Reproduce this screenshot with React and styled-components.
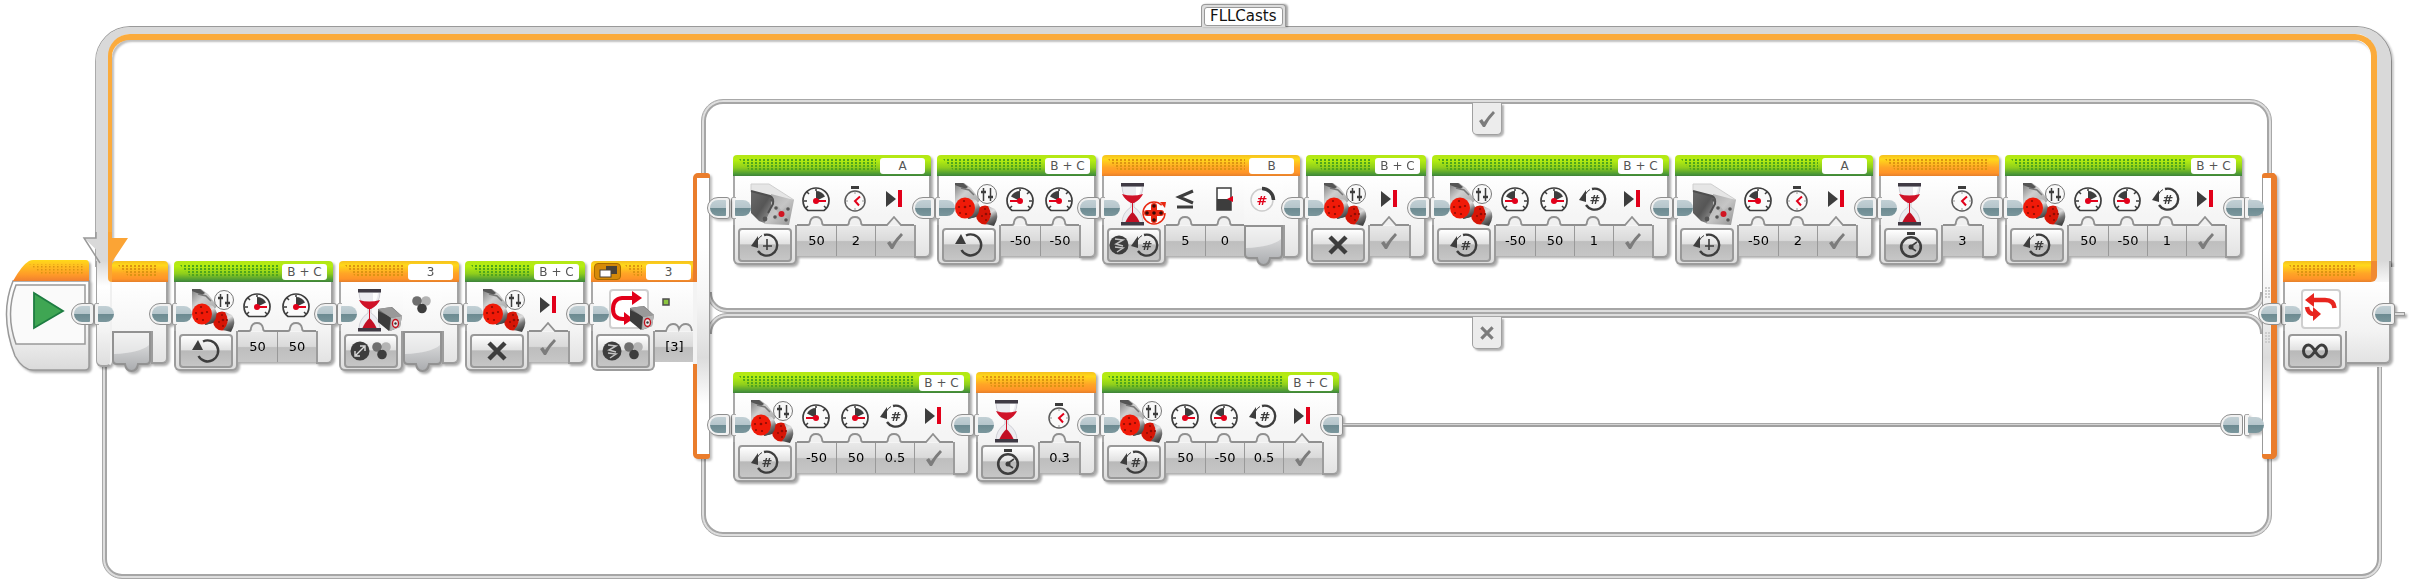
import React from 'react';
import styled, { createGlobalStyle, css } from 'styled-components';

const GlobalStyle = createGlobalStyle`
  * {
    box-sizing: border-box;
  }
  body {
    margin: 0;
    background: #fff;
    font-family: 'DejaVu Sans', Verdana, sans-serif;
  }
  button,
  input {
    font: inherit;
    margin: 0;
    padding: 0;
    border: 0;
    background: none;
    color: inherit;
  }
  svg {
    display: block;
    flex: none;
    overflow: visible;
  }
`;

const headerColors = {
  green: 'linear-gradient(#b4e616, #b4ee10 25%, #8fce1c 60%, #4c9a36 90%, #3f8239)',
  orange: 'linear-gradient(#f5c020, #ffd91a 20%, #ffa426 60%, #ff9428 85%, #e5802c)',
};

const dotColors = {
  green: '#4fa51c',
  orange: '#dc9412',
};

const bodyFill = 'linear-gradient(#fff, #f3f3f3 49px, #dedede 89px)';

/* ---------- page ---------- */

const Page = styled.main`
  display: flex;
  align-items: flex-start;
  gap: 6px;
  min-width: 2380px;
  padding: 27px 22px 4px 5px;
`;

const Loop = styled.section`
  position: relative;
  flex: 1;
  display: flex;
  align-items: flex-start;
  padding-bottom: 42px;
`;

const LoopRail = styled.div`
  position: absolute;
  top: 0;
  left: 0;
  right: 0;
  height: 240px;
  border: solid #d9d9d9;
  border-width: 7px 14px 0 12px;
  border-radius: 34px 34px 0 0;
  box-shadow: 0 -1px 0 #999, 1px 0 0 #888, -1px 0 0 #aaa, 3px 1px 2px rgba(0, 0, 0, 0.2);
  clip-path: inset(-4px -6px 0 -4px);
  &::before {
    content: '';
    position: absolute;
    inset: 0;
    border: solid #fbab3c;
    border-width: 6px 6px 0 4px;
    border-radius: 22px 22px 0 0;
  }
  &::after {
    content: '';
    position: absolute;
    inset: 6px 6px -8px 4px;
    border-radius: 18px 18px 0 0;
    box-shadow: inset 2px 2px 2px rgba(0, 0, 0, 0.25);
  }
`;

const wire = css`
  border: 1px solid #a8a8a8;
  box-shadow: inset 0 0 0 2px #dedede, inset 0 0 0 4px #a6a6a6;
`;

const LoopReturn = styled.div`
  position: absolute;
  top: 330px;
  left: 6px;
  right: 9px;
  bottom: 0;
  border-radius: 0 0 20px 20px;
  ${wire}
  clip-path: inset(10px -4px -4px -4px);
`;

const LoopName = styled.button`
  position: absolute;
  top: -23px;
  left: 1105px;
  height: 23px;
  padding: 2px;
  border: 1px solid #999;
  border-bottom: 0;
  border-radius: 4px 4px 0 0;
  background: #ddd;
  box-shadow: 2px 0 2px rgba(0, 0, 0, 0.35);
  color: #111;
  font-size: 15px;
  line-height: 17px;
  span {
    display: block;
    padding: 0 5px;
    border: 1px solid #999;
    border-radius: 3px;
    background: #fff;
  }
`;

/* ---------- blocks ---------- */

const Sequence = styled.div`
  display: flex;
  align-items: flex-start;
  gap: 6px;
  padding-top: ${(props) => props.$top}px;
`;

const BlockBox = styled.article`
  position: relative;
  flex: none;
  filter: drop-shadow(2px 2px 1px rgba(0, 0, 0, 0.32));
`;

const Header = styled.header`
  display: flex;
  align-items: center;
  justify-content: flex-end;
  gap: 4px;
  height: 21px;
  padding: 0 6px;
  border-radius: 4px 4px 0 0;
  background: ${(props) => headerColors[props.$tone]};
`;

const Dots = styled.span`
  flex: 1;
  align-self: flex-start;
  height: 11px;
  margin-top: 4px;
  margin-right: ${(props) => (props.$last ? 5 : 0)}px;
  background: radial-gradient(circle at 1px 1px, ${(props) => dotColors[props.$tone]} 1px, transparent 1px) 0 0 / 4px 3px;
  clip-path: polygon(0 0, 100% 0, 100% 100%, 10px 100%);
`;

const Port = styled.button`
  width: 45px;
  height: 16px;
  border-radius: 3px;
  background: #fff;
  color: #555;
  font-size: 12px;
  line-height: 16px;
  white-space: nowrap;
`;

const Body = styled.div`
  display: flex;
  align-items: flex-start;
`;

const ModeColumn = styled.div`
  width: 64px;
`;

const Picture = styled.div`
  display: flex;
  justify-content: flex-start;
  height: 49px;
  padding: 7px 0 0 16px;
  border-left: 2px solid #a9a9a9;
  background: linear-gradient(#fff, #f3f3f3);
`;

const ModeFoot = styled.div`
  height: 40px;
  padding: 3px;
  border: 2px solid #9c9c9c;
  border-top: 0;
  border-radius: 0 0 6px 6px;
  background: linear-gradient(#f3f3f3, #dedede);
`;

const ModeButton = styled.button`
  display: flex;
  align-items: center;
  justify-content: center;
  gap: 2px;
  width: 54px;
  height: 34px;
  border: 2px solid #999;
  border-radius: 4px;
  background: linear-gradient(#fff, #e2e2e2 45%, #b9b9b9 50%, #c6c6c6);
`;

const ParamColumn = styled.div`
  width: 39px;
`;

const ParamIcon = styled.div`
  display: flex;
  align-items: center;
  justify-content: center;
  height: ${(props) => (props.$slot ? 49 : 40)}px;
  padding-top: ${(props) => (props.$slot ? 0 : 6)}px;
  padding-right: 1px;
  padding-bottom: ${(props) => (props.$slot ? 3 : 0)}px;
  background: linear-gradient(#fff, #f5f5f5);
`;

const valueBox = css`
  display: block;
  width: 39px;
  height: 30px;
  border-left: ${(props) => (props.$first ? '0' : '1px solid #999')};
  background: linear-gradient(#e9e9e9, #dadada 48%, #bebebe 52%, #c6c6c6);
`;

const Value = styled.input`
  ${valueBox}
  padding-bottom: 2px;
  color: #000;
  font-size: 13px;
  text-align: center;
`;

const CheckValue = styled.button`
  ${valueBox}
  padding-left: 11px;
`;

const Tail = styled.div`
  width: 17px;
  height: 82px;
  border-right: 2px solid #a3a3a3;
  border-bottom: 2px solid #9c9c9c;
  border-radius: 0 0 6px 0;
  background: ${bodyFill};
  &::before {
    content: '';
    display: block;
    height: 31px;
    margin-top: 49px;
    border-left: 2px solid #9c9c9c;
  }
`;

const tealFill = 'linear-gradient(#c2d0d5, #b5c5cb 50%, #6c8a91 50%, #7b979d)';

const PlugOut = styled.span`
  position: absolute;
  z-index: 2;
  top: ${(props) => props.$top ?? 42}px;
  ${(props) => (props.$left !== undefined ? `left: ${props.$left}px;` : 'right: -4px;')}
  width: 23px;
  height: 22px;
  padding: 2px;
  border: 1px solid #8f8f8f;
  border-radius: 11px 3px 3px 11px;
  background: #f1f1f1;
  &::before {
    content: '';
    display: block;
    width: 16px;
    height: 16px;
    border-radius: 9px 1px 1px 9px;
    background: ${tealFill};
  }
`;

const PlugIn = styled.span`
  position: absolute;
  z-index: 2;
  top: ${(props) => props.$top ?? 42}px;
  left: ${(props) => props.$left ?? -2}px;
  width: 20px;
  height: 22px;
  padding: 3px 0 0 3px;
  border: solid #8f8f8f;
  border-width: 0 0 0 1px;
  border-radius: 3px 0 0 3px;
  background: linear-gradient(#aaa 1px, #f4f4f4 1px, #f4f4f4 21px, #aaa 21px) 0 0 / 4px 22px no-repeat;
  &::before {
    content: '';
    display: block;
    width: 16px;
    height: 16px;
    border-radius: 1px 9px 9px 1px;
    background: ${tealFill};
  }
`;

/* ---------- start, loop ends ---------- */

const StartBox = styled.div`
  position: relative;
  width: 85px;
  margin-top: 233px;
  filter: drop-shadow(2px 2px 1px rgba(0, 0, 0, 0.32));
`;

const LoopHeadBox = styled.div`
  position: relative;
  flex: none;
  display: flex;
  width: 72px;
  margin-top: 234px;
  margin-right: 6px;
  filter: drop-shadow(2px 2px 1px rgba(0, 0, 0, 0.32));
`;

const LoopHeadSide = styled.div`
  width: 16px;
  height: 106px;
  border: 1px solid #a3a3a3;
  border-width: 0 2px 2px 1px;
  border-right-color: #f0f0f0;
  border-radius: 0 0 6px 6px;
  background: linear-gradient(#d9d9d9, #fff 25px, #f3f3f3 70px, #dedede);
`;

const LoopHeadMain = styled.div`
  width: 56px;
`;

const LoopArrow = styled.svg`
  position: absolute;
  top: 205px;
  left: -13px;
`;

const LoopTailBox = styled.div`
  position: relative;
  flex: none;
  width: 108px;
  margin-top: 234px;
  filter: drop-shadow(2px 2px 1px rgba(0, 0, 0, 0.32));
`;

const LoopTailHeader = styled(Header)`
  width: 94px;
  padding-right: 14px;
  border-right: 6px solid #f08a32;
  border-radius: 4px 0 6px 0;
`;

const LoopTailTop = styled.div`
  border-right: 2px solid #a3a3a3;
  border-radius: 4px 0 0 0;
  background: linear-gradient(#d9d9d9, #f8f8f8);
`;

const LoopTailSide = styled.div`
  flex: 1;
  height: 82px;
  border-right: 2px solid #a3a3a3;
  border-bottom: 2px solid #9c9c9c;
  border-radius: 0 0 6px 0;
  background: ${bodyFill};
`;

const Stub = styled.span`
  position: absolute;
  top: 51px;
  right: -14px;
  width: 12px;
  height: 4px;
  border: 1px solid #999;
  background: #ddd;
`;

const PictureFrame = styled.div`
  display: flex;
  align-items: center;
  justify-content: center;
  width: 40px;
  height: 40px;
  border: 2px solid #cfcfcf;
  border-radius: 4px;
  background: #fff;
`;

/* ---------- switch ---------- */

const SwitchBox = styled.section`
  flex: 1;
  display: flex;
  align-items: flex-start;
  margin-left: 6px;
  margin-right: 6px;
`;

const SwitchHead = styled.div`
  position: relative;
  z-index: 1;
  flex: none;
  width: 102px;
  margin-top: 234px;
`;

const SwitchHeader = styled(Header)`
  width: 106px;
`;

const ViewButton = styled.button`
  display: flex;
  align-items: center;
  justify-content: center;
  width: 27px;
  height: 17px;
  margin-left: -3px;
  border: 1px solid #a86a00;
  border-radius: 4px;
  background: #d68a08;
`;

const Gate = styled.div`
  position: relative;
  flex: none;
  width: ${(props) => (props.$end ? 15 : 17)}px;
  height: 286px;
  margin-top: 146px;
  border: solid #ea7d2c;
  border-width: ${(props) => (props.$end ? '5px 6px 5px 0' : '5px 0 5px 4px')};
  border-radius: ${(props) => (props.$end ? '3px 5px 5px 3px' : '5px 3px 3px 5px')};
  background: linear-gradient(#fff 25%, #f4f4f4 45%, #dcdcdc 65%, #fff 82%);
  filter: drop-shadow(2px 2px 1px rgba(0, 0, 0, 0.25));
  z-index: 1;
  &::before {
    content: '';
    position: absolute;
    inset: 0;
    border: solid #999;
    border-width: ${(props) => (props.$end ? '0 0 0 1px' : '0 1px 0 0')};
  }
`;

const GateOpening = styled.span`
  position: absolute;
  top: 104px;
  left: -4px;
  width: 4px;
  height: 82px;
  background: #f3f3f3;
`;

const GateDots = styled.span`
  position: absolute;
  top: ${(props) => props.$top}px;
  left: 3px;
  width: 5px;
  height: 12px;
  background: radial-gradient(circle at 1px 1px, #ccc 1px, transparent 1px) 0 0 / 3px 3px;
`;

const Cases = styled.div`
  flex: 1;
  margin-top: 72px;
`;

const Case = styled.div`
  position: relative;
  height: ${(props) => (props.$last ? 224 : 214)}px;
  padding: 0 19px 0 23px;
`;

const CaseWire = styled.div`
  position: absolute;
  left: -9px;
  right: -10px;
  height: 90px;
  ${wire}
  ${(props) =>
    props.$bottom
      ? 'bottom: 0; border-radius: 0 0 22px 22px; clip-path: inset(8px -4px -4px -4px);'
      : 'top: 0; border-radius: 22px 22px 0 0; clip-path: inset(-4px -4px 8px -4px);'}
`;

const CaseDivider = styled.div`
  position: absolute;
  left: -3px;
  right: -3px;
  height: 44px;
  ${wire}
  ${(props) =>
    props.$bottom
      ? 'bottom: 0; border-radius: 0 0 20px 20px; clip-path: inset(23px 0 0 0);'
      : 'top: 0; border-radius: 20px 20px 0 0; clip-path: inset(0 0 23px 0);'}
`;

const CaseTab = styled.button`
  position: absolute;
  z-index: 1;
  top: 4px;
  left: 762px;
  display: flex;
  align-items: center;
  justify-content: center;
  width: 30px;
  height: 32px;
  border: 1px solid #a0a0a0;
  border-top: 0;
  border-radius: 0 0 5px 5px;
  background: #ececec;
  box-shadow: 2px 2px 2px rgba(0, 0, 0, 0.3);
`;

const CaseLine = styled.div`
  position: relative;
  flex: 1;
  height: 4px;
  margin-top: 51px;
  margin-right: 4px;
  margin-left: -2px;
  background: linear-gradient(#a8a8a8 1px, #d4d4d4 1px, #d4d4d4 2px, #a0a0a0 2px);
`;

/* ---------- pictures ---------- */

const dark = '#3d3d3d';
const red = '#e2001a';

const MotorsPicture = () => (
  <svg width="43" height="43" viewBox="0 0 43 43">
    <defs>
      <linearGradient id="arm" x1="0" y1="0" x2="1" y2="1">
        <stop offset="0" stopColor="#7c7c7c" />
        <stop offset=".4" stopColor="#cfcfcf" />
        <stop offset="1" stopColor="#a4a4a4" />
      </linearGradient>
      <linearGradient id="drum" x1="0" y1="0" x2=".3" y2="1">
        <stop offset="0" stopColor="#b4b4b4" />
        <stop offset=".4" stopColor="#dedede" />
        <stop offset=".7" stopColor="#777" />
        <stop offset="1" stopColor="#444" />
      </linearGradient>
    </defs>
    <path d="M0 0H9L16 5L25 17L20 24H0Z" fill="url(#arm)" />
    <path d="M0 0H8L13 4L10 6L0 2Z" fill="#555" />
    <path d="M6 5L14 7L19 12" fill="none" stroke="#777" strokeWidth="1.500" />
    <path d="M9 15L20 17Q28 23 24 33L13 36Z" fill="url(#drum)" />
    <ellipse cx="30" cy="32" rx="9" ry="9.500" fill="#d71506" />
    <path d="M33 23L40 26Q45 33 39 43L31 41Q39 33 33 23Z" fill="url(#drum)" />
    <path d="M14 15L21 17Q28 25 21 34L13 36Q22 26 14 15Z" fill="url(#drum)" />
    <ellipse cx="10" cy="25" rx="10" ry="10.500" fill="#f01a08" />
    <g fill="#8d0c04">
      <circle cx="10" cy="24" r="1.300" />
      <circle cx="4" cy="24" r="1.100" />
      <circle cx="15" cy="23" r="1.100" />
      <circle cx="9" cy="18" r="1.100" />
      <circle cx="11" cy="31" r="1.100" />
      <circle cx="5" cy="30" r="1" />
      <circle cx="31" cy="31" r="1.300" />
      <circle cx="27" cy="33" r="1" />
      <circle cx="35" cy="31" r="1" />
      <circle cx="31" cy="37" r="1" />
      <circle cx="30" cy="26" r="1" />
    </g>
    <circle cx="32" cy="11" r="9.500" fill="#f8f8f8" stroke="#777" />
    <path d="M28.500 5V18M35.500 5V18" stroke={dark} strokeWidth="1.500" />
    <path d="M26 9H31M33 14H38" stroke={dark} strokeWidth="2.500" />
  </svg>
);

const MediumMotorPicture = () => (
  <svg width="43" height="43" viewBox="0 0 43 43">
    <defs>
      <linearGradient id="side" x1="0" y1="0" x2="1" y2="1">
        <stop offset="0" stopColor="#6a6a6a" />
        <stop offset=".5" stopColor="#565656" />
        <stop offset="1" stopColor="#a8a8a8" />
      </linearGradient>
      <linearGradient id="face" x1="0" y1="0" x2="1" y2="1">
        <stop offset="0" stopColor="#a6a6a6" />
        <stop offset=".5" stopColor="#c6c6c6" />
        <stop offset="1" stopColor="#929292" />
      </linearGradient>
    </defs>
    <path d="M0 1H18L43 17L22 17L0 8Z" fill="#e6e6e6" stroke="#cfcfcf" />
    <path d="M0 8L20 13L22 24L16 41L8 38L0 30Z" fill="url(#side)" />
    <path d="M20 11L43 17L38 42L13 41L20 26Z" fill="url(#face)" />
    <path d="M0 8L19 13Q23 15 22 21L17 30" fill="none" stroke="#4f4f4f" strokeWidth="2" />
    <path d="M26 25L35 37M36 26L25 35" stroke="#b4b4b4" strokeWidth="4" strokeLinecap="round" />
    <g fill="#565656">
      <circle cx="25" cy="25" r="1.800" />
      <circle cx="37" cy="26" r="1.800" />
      <circle cx="35" cy="37" r="1.800" />
      <circle cx="24" cy="34" r="1.800" />
      <circle cx="14" cy="36" r="2.400" />
      <circle cx="21" cy="17" r="1.800" />
    </g>
    <circle cx="30.500" cy="31" r="3" fill="#d11522" />
  </svg>
);

const Hourglass = () => (
  <g>
    <path d="M2 3H23Q23 14 14 20V24Q23 30 23 40H2Q2 30 11 24V20Q2 14 2 3Z" fill="#ececf0" stroke="#d0d0d6" />
    <path d="M16 4H21Q20 12 16 15Z" fill="#fff" />
    <path d="M2 11Q12 14 23 11Q21 16 14 20H11Q5 17 2 11Z" fill="#d01228" />
    <path d="M12 20H13V32H12Z" fill="#d01228" />
    <path d="M5 40Q8 33 12.500 29Q17 33 20 40Z" fill="#c20f24" />
    <rect x="1" y="0" width="23" height="3.500" fill="#3f3a44" />
    <rect x="1" y="39" width="23" height="3.500" fill="#3f3a44" />
  </g>
);

const SensorShape = () => (
  <g>
    <path d="M0 2L14 0L24 9L22 20L12 24L0 14Z" fill="#6c6c6c" />
    <path d="M0 4L13 10L11 24L0 15Z" fill="#3c3c3c" />
    <path d="M0 2L13 0L24 9L13 11Z" fill="#999" />
    <path d="M13 11L24 9L22 20L12 24Z" fill="#b5b5b5" />
    <ellipse cx="17.500" cy="16.500" rx="3" ry="4" fill="#eee" stroke="#c3101c" strokeWidth="1.400" />
    <circle cx="17.500" cy="16.500" r="1.200" fill="#333" />
  </g>
);

const WaitTimePicture = () => (
  <svg width="43" height="43" viewBox="0 0 43 43">
    <Hourglass />
  </svg>
);

const WaitColorPicture = () => (
  <svg width="43" height="43" viewBox="0 0 43 43">
    <Hourglass />
    <g transform="translate(21 18)">
      <SensorShape />
    </g>
  </svg>
);

const WaitRotationPicture = () => (
  <svg width="43" height="43" viewBox="0 0 43 43">
    <Hourglass />
    <circle cx="34" cy="30" r="11" fill="#fff" fillOpacity=".6" stroke="#e8260f" strokeWidth="1.500" strokeDasharray="60 9" />
    <path d="M40 19L46 19L45 25Z" fill="#e8260f" />
    <path d="M34 23V37M27 30H41" stroke="#e8260f" strokeWidth="6" strokeLinecap="round" />
    <g fill="#3a0b06">
      <circle cx="34" cy="23" r="1.800" />
      <circle cx="34" cy="30" r="1.800" />
      <circle cx="34" cy="37" r="1.800" />
      <circle cx="27" cy="30" r="1.800" />
      <circle cx="41" cy="30" r="1.800" />
    </g>
  </svg>
);

const SwitchPicture = () => (
  <svg width="36" height="36" viewBox="0 0 36 36">
    <path d="M22 7H11Q2 8 2 18Q2 28 12 28H15" fill="none" stroke={red} strokeWidth="4" />
    <path d="M21 0L31 7L21 14Z" fill={red} />
    <path d="M13 21L22 28L13 34Z" fill={red} />
    <g transform="translate(19 15)">
      <SensorShape />
    </g>
  </svg>
);

const LoopPicture = () => (
  <svg width="36" height="34" viewBox="0 0 36 34">
    <path d="M9 8H22Q31 8 31.500 16" fill="none" stroke="#e8251f" strokeWidth="4.500" />
    <path d="M2 8L11 1V15Z" fill="#e8251f" />
    <path d="M4 15Q5 22 11 22" fill="none" stroke="#e8251f" strokeWidth="4.500" />
    <path d="M18 22L10 15V29Z" fill="#e8251f" />
  </svg>
);

/* ---------- parameter icons ---------- */

const Gauge = ({ reverse }) => (
  <svg width="28" height="25" viewBox="0 0 28 25">
    <g transform={reverse ? 'translate(28 0) scale(-1 1)' : undefined}>
      <path d="M6 23.500Q1 20 1 13.500A13 12.500 0 0 1 27 13.500Q27 20 22 23.500Z" fill="#fafafa" stroke={dark} strokeWidth="1.700" />
      <path d="M14 14V4Q20 4 23 9.500Z" fill={dark} />
      <path d="M2 14H5M5 5L7 7M4 21L6 19M24 21L22 19M14 2V4" stroke={dark} strokeWidth="1.500" />
      <path d="M14 14H24" stroke={red} strokeWidth="2" />
      <circle cx="14" cy="14" r="3" fill={red} />
    </g>
  </svg>
);

const Stopwatch = () => (
  <svg width="24" height="26" viewBox="0 0 24 26">
    <rect x="8" y="0" width="8" height="3" fill={dark} />
    <circle cx="12" cy="15" r="10" fill="#fafafa" stroke="#5a5a5a" strokeWidth="1.500" />
    <path d="M17 10.500L12 15L16 19.500" fill="none" stroke={red} strokeWidth="2" />
    <path d="M12 6V8M12 22V24M3 15H5M19 15H21" stroke="#999" />
  </svg>
);

const BrakeIcon = () => (
  <svg width="18" height="20" viewBox="0 0 18 20">
    <path d="M1 2L11 10L1 18Z" fill={dark} />
    <rect x="13" y="1" width="4" height="17" fill={red} />
  </svg>
);

const Cycle = ({ hash, clock, full }) => (
  <svg width="28" height="26" viewBox="0 0 28 26">
    <path
      d={full ? 'M11 3.500A10.500 10.500 0 1 1 6.500 18' : 'M13 3A10.500 10.500 0 1 1 7 19'}
      fill="none"
      stroke={dark}
      strokeWidth="2.400"
    />
    <path d={full ? 'M6 2L11 12H0Z' : 'M7 4V16L0 14Z'} fill={dark} />
    {!full && <path d="M6 9Q8 5 11 3.500" fill="none" stroke={dark} strokeWidth="1" />}
    {hash && (
      <text x="16" y="18" fontSize="13" fontWeight="bold" fill={dark} textAnchor="middle">
        #
      </text>
    )}
    {clock && <path d="M16 7V18M12 14H21" stroke={dark} strokeWidth="1.600" />}
  </svg>
);

const ColorDots = () => (
  <svg width="20" height="18" viewBox="0 0 20 18">
    <circle cx="14" cy="5" r="4.800" fill="#b4b4b4" />
    <circle cx="5" cy="5" r="4.800" fill="#6e6e6e" />
    <circle cx="10" cy="12.500" r="4.800" fill={dark} />
  </svg>
);

const LessEqual = () => (
  <svg width="18" height="20" viewBox="0 0 18 20">
    <path d="M17 2L3 8L17 14" fill="none" stroke={dark} strokeWidth="3" />
    <path d="M1 18H17" stroke={dark} strokeWidth="3" />
  </svg>
);

const Threshold = () => (
  <svg width="18" height="24" viewBox="0 0 18 24">
    <rect x="2" y="1" width="14" height="22" fill="#fff" stroke={dark} strokeWidth="1.500" />
    <rect x="2" y="12" width="14" height="11" fill={dark} />
    <path d="M12 12L18 9V15Z" fill={red} />
  </svg>
);

const RotationDial = () => (
  <svg width="26" height="26" viewBox="0 0 26 26">
    <circle cx="12" cy="14" r="11" fill="#fafafa" stroke="#ccc" strokeWidth="1.500" />
    <path d="M12 2.500A11.500 11.500 0 0 1 23.500 14" fill="none" stroke={dark} strokeWidth="3.500" />
    <text x="12" y="19" fontSize="13" fontWeight="bold" fill={red} textAnchor="middle">
      #
    </text>
  </svg>
);

const ColorSwatch = () => (
  <svg width="8" height="16" viewBox="0 0 8 16">
    <rect x="-7" y="2" width="6" height="6" fill="#8cc63f" stroke="#4d4d4d" strokeWidth="1.500" />
  </svg>
);

/* ---------- mode icons ---------- */

const CrossMark = ({ size = 20, color = dark }) => (
  <svg width={size} height={size} viewBox="0 0 20 20">
    <path d="M2 2L18 18M18 2L2 18" stroke={color} strokeWidth="4.500" />
  </svg>
);

const TickMark = () => (
  <svg width="16" height="16" viewBox="0 0 16 16">
    <path d="M0 10L3 8L5 11Q9 5 14 0L16 2Q10 8 6 16H4Z" fill="#7c7c7c" />
  </svg>
);

const CompareBadge = () => (
  <svg width="20" height="20" viewBox="0 0 20 20">
    <circle cx="10" cy="10" r="9.500" fill={dark} />
    <path d="M6 4L14 5L7 9L14 11" fill="none" stroke="#c4c4c4" strokeWidth="1.500" />
    <path d="M6 12L14 13L8 17" fill="none" stroke="#c4c4c4" strokeWidth="1.500" />
  </svg>
);

const ChangeBadge = () => (
  <svg width="20" height="20" viewBox="0 0 20 20">
    <circle cx="10" cy="10" r="9.500" fill={dark} />
    <path d="M6 14L14 6M10 5H15V10M5 10V15H10" fill="none" stroke="#ddd" strokeWidth="1.400" />
  </svg>
);

const ClockMode = () => (
  <svg width="24" height="26" viewBox="0 0 24 26">
    <rect x="8" y="0" width="8" height="3" fill={dark} />
    <circle cx="12" cy="15" r="9.800" fill="none" stroke={dark} strokeWidth="2.600" />
    <path d="M18 10L11 15L17 19" fill="none" stroke={dark} strokeWidth="1.600" />
    <circle cx="12" cy="15" r="2.500" fill={dark} />
  </svg>
);

const Infinity = () => (
  <svg width="26" height="16" viewBox="0 0 26 16">
    <path
      d="M13 8C10 3 8.500 2 6.500 2A5 6 0 0 0 6.500 14C9 14 11 11 13 8C15 5 17 2 19.500 2A5 6 0 0 1 19.500 14C17.500 14 16 13 13 8Z"
      fill="none"
      stroke={dark}
      strokeWidth="3"
    />
  </svg>
);

const params = {
  speed: <Gauge />,
  back: <Gauge reverse />,
  time: <Stopwatch />,
  turns: <Cycle hash />,
  brake: <BrakeIcon />,
  compare: <LessEqual />,
  limit: <Threshold />,
  dial: <RotationDial />,
  color: <ColorDots />,
};

const modes = {
  on: <Cycle full />,
  off: <CrossMark />,
  seconds: <Cycle clock />,
  rotations: <Cycle hash />,
  timer: <ClockMode />,
  changeColor: (
    <>
      <ChangeBadge />
      <ColorDots />
    </>
  ),
  compareColor: (
    <>
      <CompareBadge />
      <ColorDots />
    </>
  ),
  compareTurns: (
    <>
      <CompareBadge />
      <Cycle hash />
    </>
  ),
};

const edges = {
  round: 'M0 9H11Q13 9 13 6Q14 1 19 1Q24 1 25 6Q25 9 27 9H39',
  point: 'M0 9H12L19 1L26 9H39',
  list: 'M0 9H11Q13 2 18 2Q23 2 24 7Q26 2 31 2Q36 2 37 9',
};

const Edge = ({ kind }) => (
  <svg width="39" height="10" viewBox="0 0 39 10">
    <rect width="39" height="10" fill="#f5f5f5" />
    <path d={edges[kind]} fill="#f0f0f0" stroke="#909090" strokeWidth="1.800" />
  </svg>
);

const Slot = () => (
  <svg width="39" height="41" viewBox="0 0 39 41">
    <defs>
      <linearGradient id="slot" x1="0" y1="0" x2="0" y2="1">
        <stop offset="0" stopColor="#ececec" />
        <stop offset="1" stopColor="#a9abae" />
      </linearGradient>
    </defs>
    <path d="M1 1H38V29Q38 33 34 33H26Q25 40 19.500 40Q14 40 13 33H5Q1 33 1 29Z" fill="url(#slot)" stroke="#929292" strokeWidth="2" />
    <path d="M2 2H37V14Q28 22 2 23Z" fill="#f6f6f6" opacity=".6" />
  </svg>
);

const Param = ({ icon, value, first }) => {
  if (value === undefined) {
    return (
      <ParamColumn>
        <ParamIcon $slot>{params[icon]}</ParamIcon>
        <Slot />
      </ParamColumn>
    );
  }
  const checked = value === true;
  return (
    <ParamColumn>
      <ParamIcon>{params[icon]}</ParamIcon>
      <Edge kind={checked ? 'point' : 'round'} />
      {checked ? (
        <CheckValue $first={first} aria-label={icon}>
          <TickMark />
        </CheckValue>
      ) : (
        <Value $first={first} aria-label={icon} defaultValue={value} />
      )}
    </ParamColumn>
  );
};

const Block = ({ tone = 'green', port, picture, mode, items }) => (
  <BlockBox>
    <Header $tone={tone}>
      <Dots $tone={tone} $last={!port} />
      {port && <Port>{port}</Port>}
    </Header>
    <Body>
      <ModeColumn>
        <Picture>{picture}</Picture>
        <ModeFoot>
          <ModeButton aria-label={mode}>{modes[mode]}</ModeButton>
        </ModeFoot>
      </ModeColumn>
      {items.map(([icon, value], index) => (
        <Param key={index} icon={icon} value={value} first={index === 0} />
      ))}
      <Tail />
    </Body>
    <PlugIn />
    <PlugOut />
  </BlockBox>
);

const motors = <MotorsPicture />;
const mediumMotor = <MediumMotorPicture />;

const mainBlocks = [
  { port: 'B + C', picture: motors, mode: 'on', items: [['speed', '50'], ['speed', '50']] },
  { tone: 'orange', port: '3', picture: <WaitColorPicture />, mode: 'changeColor', items: [['color']] },
  { port: 'B + C', picture: motors, mode: 'off', items: [['brake', true]] },
];

const trueBlocks = [
  { port: 'A', picture: mediumMotor, mode: 'seconds', items: [['speed', '50'], ['time', '2'], ['brake', true]] },
  { port: 'B + C', picture: motors, mode: 'on', items: [['back', '-50'], ['back', '-50']] },
  {
    tone: 'orange',
    port: 'B',
    picture: <WaitRotationPicture />,
    mode: 'compareTurns',
    items: [['compare', '5'], ['limit', '0'], ['dial']],
  },
  { port: 'B + C', picture: motors, mode: 'off', items: [['brake', true]] },
  {
    port: 'B + C',
    picture: motors,
    mode: 'rotations',
    items: [['back', '-50'], ['speed', '50'], ['turns', '1'], ['brake', true]],
  },
  { port: 'A', picture: mediumMotor, mode: 'seconds', items: [['back', '-50'], ['time', '2'], ['brake', true]] },
  { tone: 'orange', picture: <WaitTimePicture />, mode: 'timer', items: [['time', '3']] },
  {
    port: 'B + C',
    picture: motors,
    mode: 'rotations',
    items: [['speed', '50'], ['back', '-50'], ['turns', '1'], ['brake', true]],
  },
];

const falseBlocks = [
  {
    port: 'B + C',
    picture: motors,
    mode: 'rotations',
    items: [['back', '-50'], ['speed', '50'], ['turns', '0.5'], ['brake', true]],
  },
  { tone: 'orange', picture: <WaitTimePicture />, mode: 'timer', items: [['time', '0.3']] },
  {
    port: 'B + C',
    picture: motors,
    mode: 'rotations',
    items: [['speed', '50'], ['back', '-50'], ['turns', '0.5'], ['brake', true]],
  },
];

const Start = () => (
  <StartBox>
    <svg width="85" height="111" viewBox="0 0 85 111">
      <defs>
        <linearGradient id="startTop" x1="0" y1="0" x2="0" y2="1">
          <stop offset="0" stopColor="#ffd91a" />
          <stop offset=".7" stopColor="#ff9a28" />
          <stop offset="1" stopColor="#f08030" />
        </linearGradient>
        <linearGradient id="startBody" x1="0" y1="0" x2="0" y2="1">
          <stop offset="0" stopColor="#fff" />
          <stop offset=".6" stopColor="#f1f1f1" />
          <stop offset="1" stopColor="#dadada" />
        </linearGradient>
        <pattern id="startDots" width="4" height="3" patternUnits="userSpaceOnUse">
          <rect width="1.500" height="1.500" fill="#dc9412" />
        </pattern>
      </defs>
      <path d="M8 21H84V106Q84 110 80 110H28Q18 110 10 96Q-6 55 8 21Z" fill="url(#startBody)" stroke="#999" strokeWidth="1.500" />
      <path d="M8 21Q17 5 24 1Q26 0 28 0H81Q84 0 84 4V21Z" fill="url(#startTop)" />
      <path d="M24 4H79V14H36Z" fill="url(#startDots)" />
      <path d="M11 25H80V84H11Q0 54 11 25Z" fill="#fafafa" stroke="#999" strokeWidth="1.500" />
      <path d="M29 33L58 51L29 68Z" fill="#3fa653" stroke="#1e7d42" strokeWidth="1.800" />
    </svg>
    <PlugOut $top={43} />
  </StartBox>
);

const LoopHead = () => (
  <LoopHeadBox>
    <LoopHeadSide />
    <LoopHeadMain>
      <Header $tone="orange">
        <Dots $tone="orange" $last />
      </Header>
      <Body>
        <ParamColumn>
          <ParamIcon $slot />
          <Slot />
        </ParamColumn>
        <Tail />
      </Body>
    </LoopHeadMain>
    <PlugIn />
    <PlugOut />
  </LoopHeadBox>
);

const LoopTail = () => (
  <LoopTailBox>
    <LoopTailTop>
      <LoopTailHeader $tone="orange">
        <Dots $tone="orange" />
      </LoopTailHeader>
    </LoopTailTop>
    <Body>
      <ModeColumn>
        <Picture>
          <PictureFrame>
            <LoopPicture />
          </PictureFrame>
        </Picture>
        <ModeFoot>
          <ModeButton aria-label="unlimited">
            <Infinity />
          </ModeButton>
        </ModeFoot>
      </ModeColumn>
      <LoopTailSide />
    </Body>
    <PlugIn />
    <PlugOut />
    <Stub />
  </LoopTailBox>
);

const Switch = () => (
  <SwitchBox>
    <SwitchHead>
      <SwitchHeader $tone="orange">
        <ViewButton aria-label="view">
          <svg width="18" height="12" viewBox="0 0 18 12">
            <rect x="7" y="0" width="11" height="8" fill="#4a4238" />
            <rect x="1" y="4" width="11" height="7" fill="#fff" stroke="#4a4238" />
          </svg>
        </ViewButton>
        <Dots $tone="orange" />
        <Port>3</Port>
      </SwitchHeader>
      <Body>
        <ModeColumn>
          <Picture>
            <PictureFrame>
              <SwitchPicture />
            </PictureFrame>
          </Picture>
          <ModeFoot>
            <ModeButton aria-label="compare color">{modes.compareColor}</ModeButton>
          </ModeFoot>
        </ModeColumn>
        <ParamColumn>
          <ParamIcon>
            <ColorSwatch />
          </ParamIcon>
          <Edge kind="list" />
          <Value $first aria-label="color list" defaultValue="[3]" />
        </ParamColumn>
      </Body>
      <PlugIn />
    </SwitchHead>
    <Gate>
      <GateOpening />
      <PlugOut $top={19} $left={10} />
      <PlugOut $top={236} $left={10} />
    </Gate>
    <Cases>
      <Case>
        <CaseWire />
        <CaseDivider $bottom />
        <CaseTab aria-label="true case">
          <TickMark />
        </CaseTab>
        <Sequence $top={56}>
          {trueBlocks.map((block, index) => (
            <Block key={index} {...block} />
          ))}
        </Sequence>
      </Case>
      <Case $last>
        <CaseWire $bottom />
        <CaseDivider />
        <CaseTab aria-label="false case">
          <CrossMark size={14} color="#7c7c7c" />
        </CaseTab>
        <Sequence $top={59}>
          {falseBlocks.map((block, index) => (
            <Block key={index} {...block} />
          ))}
          <CaseLine>
            <PlugOut $top={-9} />
          </CaseLine>
        </Sequence>
      </Case>
    </Cases>
    <Gate $end>
      <GateDots $top={109} />
      <GateDots $top={154} />
      <PlugIn $top={19} $left={-18} />
      <PlugIn $top={236} $left={-18} />
      <PlugOut $top={125} $left={-4} />
    </Gate>
  </SwitchBox>
);

export default function App() {
  return (
    <>
      <GlobalStyle />
      <Page>
        <Start />
        <Loop>
          <LoopReturn />
          <LoopRail />
          <LoopName>
            <span>FLLCasts</span>
          </LoopName>
          <LoopHead />
          <Sequence $top={234}>
            {mainBlocks.map((block, index) => (
              <Block key={index} {...block} />
            ))}
          </Sequence>
          <Switch />
          <LoopTail />
          <LoopArrow width="50" height="50" viewBox="0 0 50 50">
            <path d="M1 6H13V0H26V24H20Z" fill="#d9d9d9" />
            <path d="M13 0V6H1L17 31" fill="none" stroke="#999" strokeWidth="1.500" />
            <path d="M25 0H29V6H45L29 30V50Q25 50 25 46Z" fill="#fba435" />
          </LoopArrow>
        </Loop>
      </Page>
    </>
  );
}
